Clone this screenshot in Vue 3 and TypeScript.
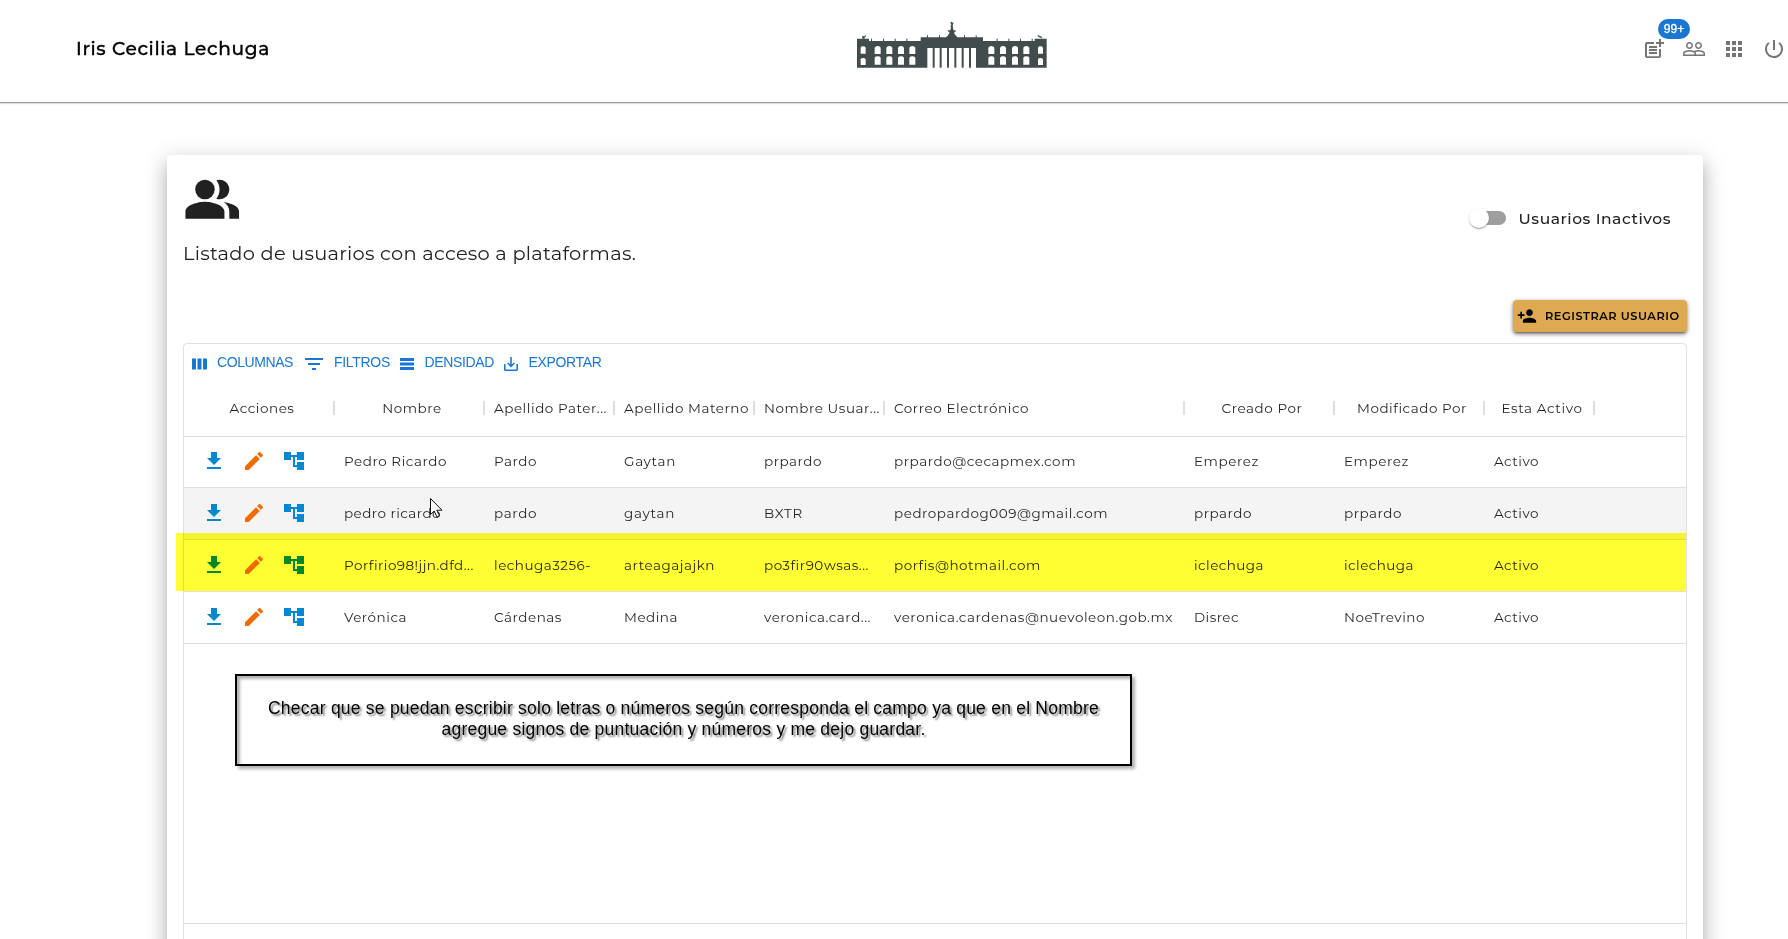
<script setup lang="ts">
interface Label { text: string; w: number }
interface Column { label: Label; width: number; centered: boolean }

// Spreads a label's letters so that it takes up the given width.
const vFit = {
  mounted(el: HTMLElement, binding: { value: number }) {
    const apply = () => {
      el.style.letterSpacing = '0px'
      const count = (el.textContent ?? '').trim().length
      const natural = el.getBoundingClientRect().width
      el.style.letterSpacing = `${(binding.value - natural) / Math.max(1, count)}px`
    }
    apply()
    document.fonts.ready.then(apply)
  },
}

const columns: Column[] = [
  { label: { text: 'Acciones', w: 65 }, width: 150, centered: true },
  { label: { text: 'Nombre', w: 59.5 }, width: 150, centered: true },
  { label: { text: 'Apellido Pater...', w: 113 }, width: 130, centered: false },
  { label: { text: 'Apellido Materno', w: 125 }, width: 140, centered: false },
  { label: { text: 'Nombre Usuar...', w: 116 }, width: 130, centered: false },
  { label: { text: 'Correo Electrónico', w: 135 }, width: 300, centered: false },
  { label: { text: 'Creado Por', w: 81 }, width: 150, centered: true },
  { label: { text: 'Modificado Por', w: 110 }, width: 150, centered: true },
  { label: { text: 'Esta Activo', w: 81 }, width: 110, centered: true },
]

const c = (text: string, w: number): Label => ({ text, w })
const rows: Label[][] = [
  [c('Pedro Ricardo', 103), c('Pardo', 43), c('Gaytan', 52), c('prpardo', 58), c('prpardo@cecapmex.com', 182), c('Emperez', 65), c('Emperez', 65), c('Activo', 45)],
  [c('pedro ricardo', 97), c('pardo', 43), c('gaytan', 51), c('BXTR', 39), c('pedropardog009@gmail.com', 214), c('prpardo', 58), c('prpardo', 58), c('Activo', 45)],
  [c('Porfirio98!jjn.dfd...', 130), c('lechuga3256-', 97), c('arteagajajkn', 91), c('po3fir90wsas...', 105), c('porfis@hotmail.com', 147), c('iclechuga', 70), c('iclechuga', 70), c('Activo', 45)],
  [c('Verónica', 63), c('Cárdenas', 68), c('Medina', 54), c('veronica.card...', 107), c('veronica.cardenas@nuevoleon.gob.mx', 279), c('Disrec', 45), c('NoeTrevino', 81), c('Activo', 45)],
]
const cellWidths = columns.slice(1).map((col) => col.width)

const windowsLeft = [104, 139, 174, 208]
const windowsRight = [445, 480, 516, 550]
</script>

<template>
  <div class="page">
    <header class="topbar">
      <div class="user"><span v-fit="194">Iris Cecilia Lechuga</span></div>
      <svg class="palace" viewBox="51 24 570 150" aria-hidden="true">
        <path fill="#434c4d" d="M51 86H87V93H242V82H318L323 77 328 70V65H324V61H331L333 52 331 48 334 45 331 37 334 35 337 38 341 36 340 40 338 46 340 61H347V65H343V71L348 77 352 82H429V93H584V86H620V173H408V114H262V173H51Z" />
        <path fill="#434c4d" d="M67 86V82L65 81 69 78 73 79 76 75 78 79 73 83 75 86ZM604 86V83L600 83 597 81 592 78 595 75 600 79 604 79 606 82Z" />
        <g fill="#434c4d">
          <rect v-for="x in [93, 129, 164, 199, 470, 505, 540, 575]" :key="x" :x="x" y="86" width="3" height="9" />
          <rect v-for="x in [261, 297, 372, 407]" :key="x" :x="x" y="76" width="3" height="8" />
          <rect v-for="x in [278, 299, 321, 343, 365, 387]" :key="x" :x="x" y="112" width="6" height="61" />
        </g>
        <g fill="#fff">
          <template v-for="x in windowsLeft.concat(windowsRight)" :key="x">
            <path :d="`M${x} 132V113Q${x + 2} 108 ${x + 9} 108 ${x + 16} 108 ${x + 18} 113V132Z`" />
            <path :d="`M${x} 164V143Q${x + 2} 139 ${x + 9} 139 ${x + 16} 139 ${x + 18} 143V164Z`" />
          </template>
          <template v-for="x in [62, 594]" :key="x">
            <path :d="`M${x} 131V113Q${x + 1} 109 ${x + 7} 109 ${x + 13} 109 ${x + 15} 113V131Z`" />
            <path :d="`M${x} 165V148Q${x + 1} 144 ${x + 7} 144 ${x + 13} 144 ${x + 15} 148V165Z`" />
          </template>
        </g>
      </svg>
      <nav class="tools">
        <span class="tool">
          <svg viewBox="0 0 24 24"><path d="M17 19.22H5V7h7V5H5c-1.1 0-2 .9-2 2v12c0 1.1.9 2 2 2h12c1.1 0 2-.9 2-2v-7h-2v7.22z" /><path d="M19 2h-2v3h-3c.01.01 0 2 0 2h3v2.99c.01.01 2 0 2 0V7h3V5h-3V2zM7 9h8v2H7zM7 12v2h8v-2h-3zM7 15h8v2H7z" /></svg>
          <span class="badge">99+</span>
        </span>
        <svg class="tool" viewBox="0 0 24 24"><path d="M16.5 13c-1.2 0-3.07.34-4.5 1-1.43-.67-3.3-1-4.5-1C5.33 13 1 14.08 1 16.25V19h22v-2.75c0-2.17-4.33-3.25-6.5-3.25zm-4 4.5h-10v-1.25c0-.54 2.56-1.75 5-1.75s5 1.21 5 1.75v1.25zm9 0H14v-1.25c0-.46-.2-.86-.52-1.22.88-.3 1.96-.53 3.02-.53 2.44 0 5 1.21 5 1.75v1.25zM7.5 12c1.93 0 3.5-1.57 3.5-3.5S9.43 5 7.5 5 4 6.57 4 8.5 5.57 12 7.5 12zm0-5.5c1.1 0 2 .9 2 2s-.9 2-2 2-2-.9-2-2 .9-2 2-2zm9 5.5c1.93 0 3.5-1.57 3.5-3.5S18.43 5 16.5 5 13 6.57 13 8.5s1.57 3.5 3.5 3.5zm0-5.5c1.1 0 2 .9 2 2s-.9 2-2 2-2-.9-2-2 .9-2 2-2z" /></svg>
        <svg class="tool" viewBox="0 0 24 24"><path d="M4 8h4V4H4v4zm6 12h4v-4h-4v4zm-6 0h4v-4H4v4zm0-6h4v-4H4v4zm6 0h4v-4h-4v4zm6-10v4h4V4h-4zm-6 4h4V4h-4v4zm6 6h4v-4h-4v4zm0 6h4v-4h-4v4z" /></svg>
        <svg class="tool" viewBox="0 0 24 24"><path d="M13 3h-2v10h2V3zm4.83 2.17-1.42 1.42C17.99 7.86 19 9.81 19 12c0 3.87-3.13 7-7 7s-7-3.13-7-7c0-2.19 1.01-4.14 2.58-5.42L6.17 5.17C4.23 6.82 3 9.26 3 12c0 4.97 4.03 9 9 9s9-4.03 9-9c0-2.74-1.23-5.18-3.17-6.83z" /></svg>
      </nav>
    </header>

    <main class="card">
      <div class="heading">
        <div>
          <svg class="people" viewBox="0 0 24 24"><path d="M16.67 13.13C18.04 14.06 19 15.32 19 17v3h4v-3c0-2.18-3.57-3.47-6.33-3.87z" /><circle cx="9" cy="8" r="4" /><path d="M15 12c2.21 0 4-1.79 4-4s-1.79-4-4-4c-.47 0-.91.1-1.33.24C14.5 5.27 15 6.58 15 8s-.5 2.73-1.33 3.76c.42.14.86.24 1.33.24zM9 13c-2.67 0-8 1.34-8 4v3h16v-3c0-2.66-5.33-4-8-4z" /></svg>
          <div class="subtitle"><span v-fit="453">Listado de usuarios con acceso a plataformas.</span></div>
        </div>
        <label class="toggle">
          <span class="track"><span class="thumb"></span></span>
          <span v-fit="152.5">Usuarios Inactivos</span>
        </label>
      </div>
      <div class="actions">
        <button class="register">
          <svg viewBox="0 0 24 24"><path d="M15 12c2.21 0 4-1.79 4-4s-1.79-4-4-4-4 1.79-4 4 1.79 4 4 4zm-9-2V7H4v3H1v2h3v3h2v-3h3v-2H6zm9 4c-2.67 0-8 1.34-8 4v2h16v-2c0-2.66-5.33-4-8-4z" /></svg>
          <span v-fit="134.5">REGISTRAR USUARIO</span>
        </button>
      </div>

      <section class="grid">
        <div class="toolbar">
          <span class="tbtn t1"><svg viewBox="0 0 15 12"><path d="M0 .5h4v11H0zM5.5.5h4v11h-4zM11 .5h4v11h-4z" /></svg><span v-fit="76">COLUMNAS</span></span>
          <span class="tbtn t2"><svg viewBox="0 0 18 12"><path d="M0 0h18v2H0zM3 5h12v2H3zM7 10h4v2H7z" /></svg><span v-fit="56">FILTROS</span></span>
          <span class="tbtn t3"><svg viewBox="0 0 14 12"><path d="M0 0h14v3H0zM0 4.5h14v3H0zM0 9h14v3H0z" /></svg><span v-fit="69.5">DENSIDAD</span></span>
          <span class="tbtn t4"><svg viewBox="3 3 18 18"><path d="M19 12v7H5v-7H3v7c0 1.1.9 2 2 2h14c1.1 0 2-.9 2-2v-7h-2zm-6 .67 2.59-2.58L17 11.5l-5 5-5-5 1.41-1.41L11 12.67V3h2z" /></svg><span v-fit="73">EXPORTAR</span></span>
        </div>
        <div class="row head">
          <div v-for="col in columns" :key="col.label.text" class="cell" :class="{ centered: col.centered }" :style="{ width: `${col.width}px` }">
            <span v-fit="col.label.w">{{ col.label.text }}</span>
          </div>
        </div>
        <div class="body">
          <div v-for="(row, i) in rows" :key="i" class="row" :class="{ hovered: i === 1 }">
            <div class="icons">
              <svg class="blue" viewBox="0 0 24 24"><path d="M19 9h-4V3H9v6H5l7 7 7-7zM5 18v2h14v-2H5z" /></svg>
              <svg class="orange" viewBox="0 0 24 24"><path d="M3 17.25V21h3.75L17.81 9.94l-3.75-3.75L3 17.25zM20.71 7.04c.39-.39.39-1.02 0-1.41l-2.34-2.34c-.39-.39-1.02-.39-1.41 0l-1.83 1.83 3.75 3.75 1.83-1.83z" /></svg>
              <svg class="blue" viewBox="0 0 24 24"><path d="M22 11V3h-7v3H9V3H2v8h7V8h2v10h4v3h7v-8h-7v3h-2V8h2v3h7z" /></svg>
            </div>
            <div v-for="(cell, j) in row" :key="j" class="cell" :style="{ width: `${cellWidths[j]}px` }">
              <span v-fit="cell.w">{{ cell.text }}</span>
            </div>
          </div>
          <div class="marker"></div>
          <svg class="cursor" viewBox="0 0 13 20"><path d="M.5.5V16.5L4.2 13 7 19 9.5 18 6.8 12.2H12Z" fill="#fff" stroke="#111" /></svg>
        </div>
        <div class="empty">
          <div class="note">
            <div><span v-fit="831">Checar que se puedan escribir solo letras o números según corresponda el campo ya que en el Nombre</span></div>
            <div><span v-fit="484">agregue signos de puntuación y números y me dejo guardar.</span></div>
          </div>
        </div>
        <div class="foot"></div>
      </section>
    </main>
  </div>
</template>

<style>
body { margin: 0; background: #fff; }
</style>

<style scoped>
.page { height: 939px; overflow: hidden; background: #fff; font-family: Montserrat, Inter, sans-serif; color: #212121; }
.page * { box-sizing: border-box; }
.page span { white-space: nowrap; }
.topbar { display: grid; grid-template-columns: 857px 190px 1fr; height: 103px; border-bottom: 1px solid #999; box-shadow: 0 1px 1px rgba(0, 0, 0, 0.12); background: #fff; }
.user { padding: 37px 0 0 76px; font-size: 18.6px; line-height: 24px; font-weight: 500; color: #000; -webkit-text-stroke: 0.3px #000; }
.palace { width: 190px; height: 50px; margin-top: 18px; }
.tools { display: flex; justify-content: flex-end; gap: 16px; padding: 37px 2px 0 0; }
.tool { position: relative; flex: none; width: 24px; height: 24px; fill: #757575; }
.tool svg { display: block; width: 24px; height: 24px; }
.badge { position: absolute; left: 16px; top: -18px; width: 32px; height: 20px; border-radius: 10px; background: #1976d2; color: #fff; font: 500 12px/20px "Liberation Sans", Arial, sans-serif; -webkit-text-stroke: 0.3px #fff; text-align: center; }
.card { width: 1536px; height: 900px; margin: 52px 0 0 167px; padding: 15px 16px 0; border-radius: 4px; background: #fff; box-shadow: 0 7px 8px -4px rgba(0, 0, 0, 0.2), 0 12px 17px 2px rgba(0, 0, 0, 0.14), 0 5px 22px 4px rgba(0, 0, 0, 0.12); }
.heading { display: flex; justify-content: space-between; height: 130px; }
.people { display: block; width: 58.5px; height: 58.5px; margin-left: -.5px; fill: #212121; }
.subtitle { margin-top: 12.5px; font-size: 19.4px; line-height: 24px; }
.toggle { display: flex; align-items: center; height: 24px; margin: 36px 16px 0 0; font-size: 15.5px; font-weight: 500; }
.track { width: 34px; height: 14px; border-radius: 7px; background: #9e9e9e; margin-right: 12.5px; }
.thumb { display: block; width: 20px; height: 20px; margin: -3px 0 0 -3px; border-radius: 50%; background: #fff; box-shadow: 0 2px 1px -1px rgba(0, 0, 0, 0.2), 0 1px 1px rgba(0, 0, 0, 0.14), 0 1px 3px rgba(0, 0, 0, 0.12); }
.actions { display: flex; justify-content: flex-end; height: 43px; }
.register { display: flex; align-items: center; width: 174px; height: 32px; padding: 0 0 0 4px; border: 0; border-radius: 4px; background: #dea950; color: #000; font: 600 11.4px/20px Montserrat, Inter, sans-serif; box-shadow: 0 3px 1px -2px rgba(0, 0, 0, 0.2), 0 2px 2px rgba(0, 0, 0, 0.14), 0 1px 5px rgba(0, 0, 0, 0.3), 0 3px 4px rgba(0, 0, 0, 0.2); }
.register svg { width: 20px; height: 20px; margin-right: 8px; }
.grid { height: 640px; border: 1px solid #e0e0e0; border-radius: 4px; }
.toolbar { display: flex; height: 37px; color: #1976d2; font: 14px/16px "Liberation Sans", Arial, sans-serif; padding: 10px 0 0 8px; }
.tbtn { display: flex; height: 16px; }
.tbtn svg { fill: #1976d2; flex: none; margin-top: 4px; height: 12px; }
.t1 { width: 113px; } .t1 svg { width: 15px; margin-right: 10px; }
.t2 { width: 95px; } .t2 svg { width: 18px; margin-right: 11px; }
.t3 { width: 104px; } .t3 svg { width: 14px; margin-right: 10.5px; }
.t4 svg { width: 14px; height: 14px; margin: 3px 10.5px 0 0; }
.row { display: flex; height: 52px; border-bottom: 1px solid #e0e0e0; font-size: 13.5px; line-height: 20px; color: rgba(0, 0, 0, 0.87); }
.row.head { height: 56px; }
.body { position: relative; margin-top: -1px; }
.hovered { background: #f4f4f4; }
.cell { display: flex; align-items: center; flex: none; padding: 0 0 2px 10px; }
.head .cell { position: relative; padding-bottom: 1px; }
.head .cell::after { content: ""; position: absolute; right: -1px; top: 20px; width: 2px; height: 14px; background: #e0e0e0; }
.head .centered { justify-content: center; padding-left: 6px; }
.icons { display: flex; align-items: center; gap: 16px; width: 150px; padding: 0 0 2px 18px; }
.icons svg { width: 24px; height: 24px; }
.blue { fill: #0288d1; }
.orange { fill: #ef6c00; }
.marker { position: absolute; left: -8px; right: 0; top: 97px; height: 58px; background: #ff3; mix-blend-mode: multiply; }
.cursor { position: absolute; left: 246px; top: 62px; width: 13px; height: 20px; }
.empty { height: 280px; padding: 30px 0 0 51px; border-bottom: 1px solid #e0e0e0; }
.note { width: 897px; height: 92px; padding-top: 22px; border: 2px solid #000; text-align: center; color: #000; font: 17.5px/21.3px "Liberation Sans", Arial, sans-serif; text-shadow: 2px 2px 2px rgba(0, 0, 0, 0.5); box-shadow: 3px 3px 3px rgba(0, 0, 0, 0.3), inset 3px 3px 3px rgba(0, 0, 0, 0.3); }
.foot { height: 60px; }
</style>
